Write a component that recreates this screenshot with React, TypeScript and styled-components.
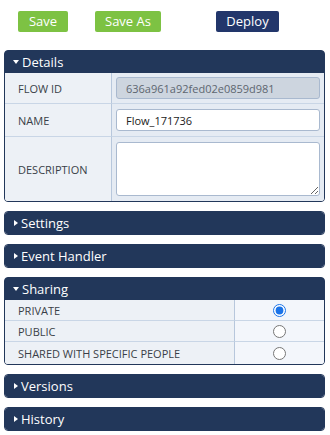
import React from "react";
import styled, { createGlobalStyle } from "styled-components";

const Global = createGlobalStyle`
  html, body { margin: 0; padding: 0; background: #ffffff; }
  body { font-family: "Open Sans", "Noto Sans", sans-serif; }
  * { box-sizing: border-box; }
`;

const Page = styled.div`
  width: 330px;
  padding: 11px 5px 0 4px;
  display: flex;
  flex-direction: column;
`;

const Toolbar = styled.div`
  display: flex;
  align-items: center;
  height: 21px;
  margin-bottom: 18px;
  padding-left: 14px;
`;

const Button = styled.button<{ $variant: "green" | "navy"; $w: number; $ml: number }>`
  width: ${(p) => p.$w}px;
  height: 21px;
  margin-left: ${(p) => p.$ml}px;
  border: none;
  border-radius: 2px;
  padding: 0;
  font-family: "Open Sans", "Noto Sans", sans-serif;
  font-size: 13px;
  line-height: 21px;
  color: #ffffff;
  background: ${(p) => (p.$variant === "green" ? "#7dc243" : "#22366b")};
`;

const Panel = styled.section`
  border: 1px solid #22375a;
  border-radius: 4px;
  overflow: hidden;
  margin-bottom: 9px;
  background: #22375a;
`;

const Header = styled.div`
  height: 22px;
  display: flex;
  align-items: center;
  padding-left: 8px;
  color: #ffffff;
  font-size: 13px;
  background: #22375a;
`;

const Caret = styled.span<{ $open?: boolean }>`
  display: inline-block;
  width: 0;
  height: 0;
  ${(p) =>
    p.$open
      ? `border-left: 3.5px solid transparent; border-right: 3.5px solid transparent; border-top: 4px solid #fff; margin-right: 3px;`
      : `border-top: 3.5px solid transparent; border-bottom: 3.5px solid transparent; border-left: 4px solid #fff; margin-left: 1px; margin-right: 3px;`}
`;

const Grid = styled.div<{ $cols: string }>`
  display: grid;
  grid-template-columns: ${(p) => p.$cols};
  background: #ffffff;
`;

const Label = styled.div<{ $h: number; $last?: boolean }>`
  height: ${(p) => p.$h}px;
  display: flex;
  align-items: center;
  padding-left: 13px;
  font-size: 11px;
  color: #3a3f48;
  background: #edf1f6;
  border-right: 1px solid #b7c7dc;
  border-bottom: ${(p) => (p.$last ? "none" : "1px solid #c9d6e6")};
`;

const Cell = styled.div<{ $h: number; $last?: boolean; $light?: boolean; $center?: boolean }>`
  height: ${(p) => p.$h}px;
  display: flex;
  align-items: center;
  justify-content: ${(p) => (p.$center ? "center" : "flex-start")};
  padding: 0 4px;
  background: ${(p) => (p.$light ? "#f3f6fb" : "#e5ebf3")};
  border-bottom: ${(p) => (p.$last ? "none" : "1px solid #c9d6e6")};
`;

const Input = styled.input<{ $disabled?: boolean }>`
  width: 100%;
  height: 22px;
  border: 1px solid #a9b9cf;
  border-radius: 3px;
  padding: 0 9px;
  font-family: "Open Sans", "Noto Sans", sans-serif;
  font-size: 11px;
  color: ${(p) => (p.$disabled ? "#5d6670" : "#222")};
  background: ${(p) => (p.$disabled ? "#cdd5df" : "#ffffff")};
  outline: none;
`;

const TextArea = styled.textarea`
  width: 100%;
  height: 54px;
  border: 1px solid #a9b9cf;
  border-radius: 3px;
  background: #ffffff;
  resize: vertical;
  outline: none;
  display: block;
`;

const Radio = styled.input`
  width: 13px;
  height: 13px;
  margin: 0;
  accent-color: #1a73e8;
`;

const Collapsed = ({ title }: { title: string }) => (
  <Panel>
    <Header>
      <Caret />
      {title}
    </Header>
  </Panel>
);

export default function App() {
  return (
    <>
      <Global />
      <Page>
        <Toolbar>
          <Button $variant="green" $w={50} $ml={0}>Save</Button>
          <Button $variant="green" $w={66} $ml={27}>Save As</Button>
          <Button $variant="navy" $w={63} $ml={55}>Deploy</Button>
        </Toolbar>

        <Panel>
          <Header>
            <Caret $open />
            Details
          </Header>
          <Grid $cols="107px 1fr">
            <Label $h={31}>FLOW ID</Label>
            <Cell $h={31}>
              <Input $disabled readOnly value="636a961a92fed02e0859d981" />
            </Cell>
            <Label $h={33}>NAME</Label>
            <Cell $h={33}>
              <Input readOnly value="Flow_171736" />
            </Cell>
            <Label $h={64} $last>DESCRIPTION</Label>
            <Cell $h={64} $last>
              <TextArea />
            </Cell>
          </Grid>
        </Panel>

        <Collapsed title="Settings" />
        <Collapsed title="Event Handler" />

        <Panel>
          <Header>
            <Caret $open />
            Sharing
          </Header>
          <Grid $cols="230px 1fr">
            <Label $h={21}>PRIVATE</Label>
            <Cell $h={21} $light $center>
              <Radio type="radio" name="share" defaultChecked />
            </Cell>
            <Label $h={21}>PUBLIC</Label>
            <Cell $h={21} $light $center>
              <Radio type="radio" name="share" />
            </Cell>
            <Label $h={22} $last>SHARED WITH SPECIFIC PEOPLE</Label>
            <Cell $h={22} $light $center $last>
              <Radio type="radio" name="share" />
            </Cell>
          </Grid>
        </Panel>

        <Collapsed title="Versions" />
        <Collapsed title="History" />
      </Page>
    </>
  );
}
